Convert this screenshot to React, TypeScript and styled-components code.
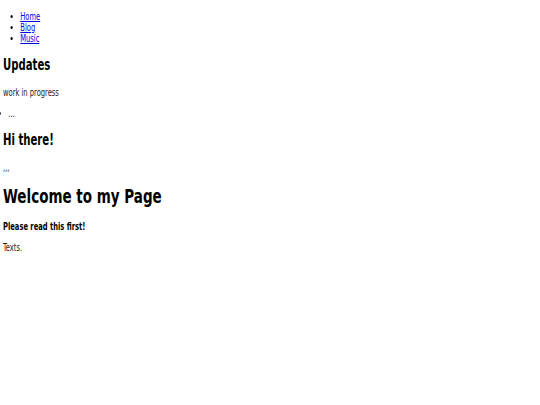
import React from 'react';
import styled, { createGlobalStyle } from 'styled-components';

const GlobalStyle = createGlobalStyle`
  body {
    margin: 0;
    background: #ffffff;
    color: #000000;
    font-family: "DejaVu Sans", sans-serif;
    font-stretch: condensed;
    font-size: 10px;
    overflow: hidden;
  }
`;

// the shot is squeezed sideways, so the page is drawn 720 wide and narrowed
const Page = styled.div`
  width: 712px;
  padding: 1px 4px;
  transform: scaleX(0.75);
  transform-origin: 0 0;
`;

const Nav = styled.ul`
  margin: 10px 0;
  padding-left: 23px;
  list-style: disc;
`;

const NavLink = styled.a`
  color: #0000ee;
  text-decoration: underline;
`;

const Heading = styled.h2`
  font-size: 15px;
  margin: 12px 0 13px;
`;

const Title = styled.h1`
  font-size: 20px;
  margin: 11px 0 13px;
`;

const Notice = styled.h4`
  font-size: 10px;
  margin: 13px 0 10px;
`;

const Text = styled.p`
  margin: 10px 0;
  color: #222;
`;

const Dots = styled.ul`
  margin: 10px 0;
  padding-left: 7px;
`;

export default function App() {
  return (
    <>
      <GlobalStyle />
      <Page>
        <Nav>
          <li><NavLink href="#">Home</NavLink></li>
          <li><NavLink href="#">Blog</NavLink></li>
          <li><NavLink href="#">Music</NavLink></li>
        </Nav>
        <Heading>Updates</Heading>
        <Text>work in progress</Text>
        <Dots>
          <li>...</li>
        </Dots>
        <Heading>Hi there!</Heading>
        <Text>,,,</Text>
        <Title>Welcome to my Page</Title>
        <Notice>Please read this first!</Notice>
        <Text>Texts.</Text>
      </Page>
    </>
  );
}
